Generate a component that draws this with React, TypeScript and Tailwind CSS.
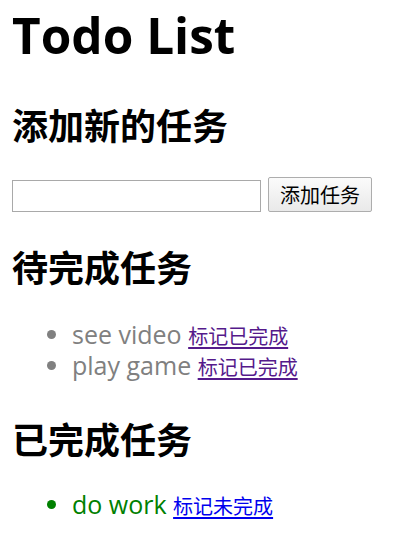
import React from "react";

export default function App() {
  const latin = "font-['Open_Sans','Noto_Sans_CJK_SC',sans-serif]";
  const cjk = "font-['Noto_Sans_CJK_SC',sans-serif]";
  return (
    <div className={`bg-white min-h-[549px] px-[12px] pt-[4px] text-black ${latin}`}>
      <h1 className="text-[49.5px] font-bold leading-[63px]">Todo List</h1>
      <h2 className={`mt-[33px] text-[36px] font-bold leading-[48px] ${cjk}`}>添加新的任务</h2>
      <div className="mt-[29px] flex items-end gap-[7px]">
        <input
          type="text"
          className="h-[32px] w-[249px] border border-[#a9a9a9] bg-white px-[3px] text-[20px] outline-none"
        />
        <button
          className={`h-[35px] w-[104px] border border-[#adadad] rounded-[2px] bg-gradient-to-b from-[#fbfbfb] to-[#e9e9e9] text-[20px] leading-[33px] text-black ${cjk}`}
        >
          添加任务
        </button>
      </div>
      <h2 className={`mt-[30px] text-[36px] font-bold leading-[48px] ${cjk}`}>待完成任务</h2>
      <ul className="mt-[29px] list-disc pl-[60px] text-[25px] leading-[31px] text-[#808080]">
        <li>
          see video{" "}
          <a href="#" className={`text-[20px] leading-none text-[#551a8b] underline underline-offset-[3px] ${cjk}`}>标记已完成</a>
        </li>
        <li>
          play game{" "}
          <a href="#" className={`text-[20px] leading-none text-[#551a8b] underline underline-offset-[3px] ${cjk}`}>标记已完成</a>
        </li>
      </ul>
      <h2 className={`mt-[33px] text-[36px] font-bold leading-[48px] ${cjk}`}>已完成任务</h2>
      <ul className="mt-[27px] list-disc pl-[60px] text-[25px] leading-[31px] text-[#008000]">
        <li>
          do work{" "}
          <a href="#" className={`text-[20px] leading-none text-[#0000ee] underline underline-offset-[3px] ${cjk}`}>标记未完成</a>
        </li>
      </ul>
    </div>
  );
}
